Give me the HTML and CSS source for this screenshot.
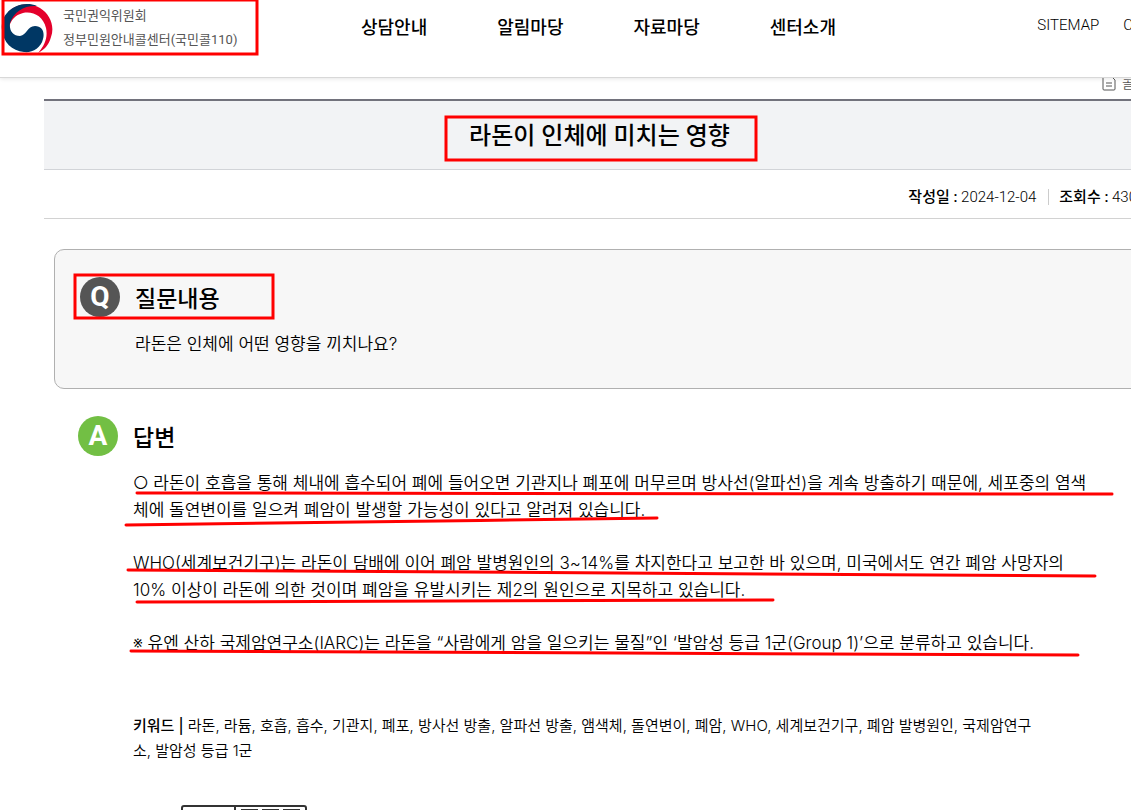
FILE: index.html
```
<!DOCTYPE html>
<html lang="ko">
<head>
  <meta charset="UTF-8" />
  <meta name="viewport" content="width=device-width, initial-scale=1.0" />
  <title>라돈이 인체에 미치는 영향</title>
  <link rel="stylesheet" href="styles.css">
</head>
<body>

  <!-- Header -->
  <header class="header">
    <a class="logo" href="#">
      <svg class="logo-mark" viewBox="0 0 52 52" aria-hidden="true">
        <path fill="#e4002b" d="M7 9 C16 0 30 -1 39 5 C49 11 54 23 50 34 C48 42 43 47 37 50 C44 42 47 34 45 25 C42 13 32 8 22 10 C14 12 10 17 8 24 Z" />
        <path fill="#003764" d="M6 10 C14 1 26 -1 36 3 C24 2 13 8 9 20 C8 28 12 33 19 33 C26 32 26 23 34 23 C41 23 44 29 42 36 C40 45 31 50 23 49 C11 48 2 39 1 27 C0 20 2 14 6 10 Z" />
      </svg>
      <span class="logo-text">국민권익위원회<br />정부민원안내콜센터(국민콜110)</span>
    </a>
    <nav class="nav">
      <a href="#">상담안내</a>
      <a href="#">알림마당</a>
      <a href="#">자료마당</a>
      <a href="#">센터소개</a>
    </nav>
    <div class="util">
      <a href="#">SITEMAP</a>
      <a href="#">C</a>
    </div>
  </header>

  <main class="content">
    <div class="tools">
      <a href="#">
        <svg class="doc-icon" viewBox="0 0 14 16" aria-hidden="true">
          <path d="M2 1 H9 L13 5 V14 Q13 15 12 15 H2 Q1 15 1 14 V2 Q1 1 2 1 Z M4 8 H10 M4 11 H10" />
        </svg>
        <span>콜</span>
      </a>
    </div>

    <h1 class="title">라돈이 인체에 미치는 영향</h1>
    <div class="meta">
      <span><b>작성일 :</b> 2024-12-04</span>
      <span class="views"><b>조회수 :</b> 430</span>
    </div>

    <!-- Question -->
    <section class="qna question">
      <span class="badge">Q</span>
      <div class="text">
        <h2>질문내용</h2>
        <p>라돈은 인체에 어떤 영향을 끼치나요?</p>
      </div>
    </section>

    <!-- Answer -->
    <section class="qna answer">
      <span class="badge">A</span>
      <div class="text">
        <h2>답변</h2>
        <p>○ 라돈이 호흡을 통해 체내에 흡수되어 폐에 들어오면 기관지나 폐포에 머무르며 방사선(알파선)을 계속 방출하기 때문에, 세포중의 염색<br />체에 돌연변이를 일으켜 폐암이 발생할 가능성이 있다고 알려져 있습니다.</p>
        <p>WHO(세계보건기구)는 라돈이 담배에 이어 폐암 발병원인의 3~14%를 차지한다고 보고한 바 있으며, 미국에서도 연간 폐암 사망자의<br />10% 이상이 라돈에 의한 것이며 폐암을 유발시키는 제2의 원인으로 지목하고 있습니다.</p>
        <p>※ 유엔 산하 국제암연구소(IARC)는 라돈을 “사람에게 암을 일으키는 물질”인 ‘발암성 등급 1군(Group 1)’으로 분류하고 있습니다.</p>
        <p class="keywords"><b>키워드 |</b> 라돈, 라듐, 호흡, 흡수, 기관지, 폐포, 방사선 방출, 알파선 방출, 앰색체, 돌연변이, 폐암, WHO, 세계보건기구, 폐암 발병원인, 국제암연구<br />소, 발암성 등급 1군</p>
      </div>
    </section>

    <svg class="license" viewBox="0 0 126 40" aria-hidden="true">
      <rect x="1" y="1" width="124" height="38" rx="2" />
      <path d="M54 1 V39 M60 5 H77 M81 5 H98 M102 5 H119" />
    </svg>
  </main>

  <!-- Red pen marks -->
  <svg class="marks" width="1131" height="810" aria-hidden="true">
    <rect x="3" y="0" width="254" height="54" />
    <rect x="446" y="117" width="310" height="43" />
    <rect x="75" y="275" width="198" height="43" />
    <path d="M137 493 L1112 494" />
    <path d="M126 525 C300 522 480 521 657 518" />
    <path d="M128 570 C400 573 800 573 1095 576" />
    <path d="M137 602 L773 600" />
    <path d="M131 651 C400 653 800 653 1078 655" />
  </svg>

</body>
</html>
```
FILE: styles.css
```
* {
  box-sizing: border-box;
}

body {
  margin: 0;
  height: 100vh;
  overflow: hidden;
  position: relative;
  font-family: Roboto, "Noto Sans CJK KR", sans-serif;
  font-weight: 350;
  color: #000;
  background: #fff;
}

a {
  color: inherit;
  text-decoration: none;
}

h1, h2, p {
  margin: 0;
}

/* Header */
.header {
  display: flex;
  align-items: flex-start;
  height: 78px;
  border-bottom: 1px solid #d8d8d8;
  box-shadow: 0 1px 4px rgba(0, 0, 0, 0.1);
  white-space: nowrap;
}

.logo {
  display: flex;
  gap: 10px;
  width: 361px;
  padding: 3px 0 0 1px;
}

.logo-mark {
  width: 52px;
  height: 52px;
}

.logo-text {
  padding-top: 1px;
  font-size: 13px;
  font-weight: 400;
  line-height: 24px;
  color: #555;
}

.nav {
  display: flex;
  gap: 70px;
  font-size: 18px;
  font-weight: 500;
  line-height: 56px;
}

.util {
  display: flex;
  gap: 24px;
  margin-left: auto;
  margin-right: -2px;
  font-size: 15px;
  line-height: 50px;
}

/* Content runs past the right edge */
.content {
  margin: 0 -24px 0 44px;
}

.tools {
  display: flex;
  justify-content: flex-end;
  align-items: flex-end;
  height: 21px;
  padding-right: 20px;
  overflow: hidden;
}

.tools a {
  display: flex;
  align-items: center;
  gap: 6px;
  font-size: 14px;
  line-height: 32px;
  color: #555;
}

.doc-icon {
  width: 14px;
  height: 16px;
  fill: none;
  stroke: #555;
}

.title {
  padding: 2px 0 0;
  border-top: 2px solid #72727c;
  border-bottom: 1px solid #d2d4d8;
  background: #f2f3f5;
  font-size: 24px;
  font-weight: 500;
  line-height: 66px;
  text-align: center;
}

.meta {
  display: flex;
  justify-content: flex-end;
  align-items: center;
  gap: 12px;
  height: 49px;
  padding: 6px 18px 0 0;
  border-bottom: 1px solid #d2d2d2;
  font-size: 15px;
  line-height: 16px;
}

.meta b {
  font-weight: 500;
}

.views {
  padding-left: 10px;
  border-left: 1px solid #ccc;
}

/* Question and answer */
.qna {
  display: flex;
  gap: 15px;
  margin-left: 10px;
}

.question {
  margin-top: 30px;
  margin-right: 10px;
  height: 140px;
  padding: 27px 25px;
  border: 1px solid #b0b0b0;
  border-radius: 10px;
  background: #f7f7f7;
}

.answer {
  padding: 27px 24px 0;
}

.badge {
  flex: none;
  width: 40px;
  height: 40px;
  border-radius: 50%;
  background: #555;
  color: #fff;
  font-family: Roboto, sans-serif;
  font-size: 28px;
  font-weight: 700;
  line-height: 40px;
  text-align: center;
}

.answer .badge {
  background: #72bf44;
}

.text {
  padding-top: 2px;
  font-family: Inter, "Noto Sans CJK KR", sans-serif;
  white-space: nowrap;
}

.text h2 {
  margin-bottom: 12px;
  font-size: 23px;
  font-weight: 500;
  line-height: 40px;
}

.text p {
  margin-bottom: 26px;
  font-size: 17px;
  line-height: 27px;
}

.text .keywords {
  margin-top: 56px;
  font-size: 15px;
  line-height: 25px;
}

.keywords b {
  font-weight: 500;
}

.license {
  display: block;
  width: 126px;
  height: 40px;
  margin: 16px 0 0 137px;
  fill: none;
  stroke: #333;
  stroke-width: 2;
}

/* Red pen marks */
.marks {
  position: absolute;
  top: 0;
  left: 0;
  fill: none;
  stroke: #f00;
  stroke-width: 3;
  stroke-linecap: round;
  pointer-events: none;
}
```
